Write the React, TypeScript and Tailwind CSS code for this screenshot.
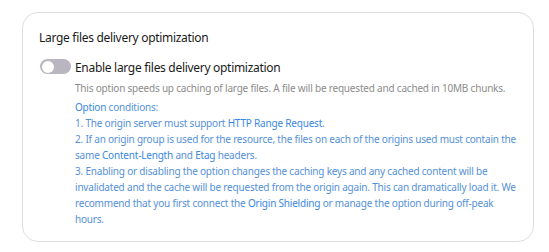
import React from 'react'

function App() {
  return (
    <div className="min-h-screen bg-white pt-3 pl-[22px] pr-4" style={{ fontFamily: '"Noto Sans", sans-serif' }}>
      <div className="w-[512px] h-[230px] rounded-2xl border border-[#dedede] pt-[15px] pl-[16px] pr-4">
        <div className="text-[12px] leading-5 tracking-[-0.3px] text-[#1a1a1a]">
          Large files delivery optimization
        </div>
        <div className="flex items-start gap-[4px] mt-[10px]">
          <div className="ml-[1px] mt-[1px] w-[31px] h-[15px] rounded-full bg-[#b9b5c1] flex items-center px-[2px] shrink-0">
            <div className="w-[12px] h-[12px] rounded-full bg-white" />
          </div>
          <div className="flex flex-col whitespace-nowrap">
            <div className="text-[12px] leading-5 tracking-[-0.3px] text-[#1a1a1a]">
              Enable large files delivery optimization
            </div>
            <div className="text-[10px] leading-4 tracking-[-0.2px] text-[#8c8c8c] mt-[2px]">
              This option speeds up caching of large files. A file will be requested and cached in 10MB chunks.
            </div>
            <div className="text-[10px] leading-4 tracking-[-0.2px] text-[#5590d9] mt-[3px]">
              <div><span className="text-[#3a88e2]">Option</span> conditions:</div>
              <div>1. The origin server must support <span className="text-[#3a88e2]">HTTP Range Request</span>.</div>
              <div>2. If an origin group is used for the resource, the files on each of the origins used must contain the</div>
              <div>same <span className="text-[#3a88e2]">Content-Length</span> and <span className="text-[#3a88e2]">Etag</span> headers.</div>
              <div>3. Enabling or disabling the option changes the caching keys and any cached content will be</div>
              <div>invalidated and the cache will be requested from the origin again. This can dramatically load it. We</div>
              <div>recommend that you first connect the <span className="text-[#3a88e2]">Origin Shielding</span> or manage the option during off-peak</div>
              <div>hours.</div>
            </div>
          </div>
        </div>
      </div>
    </div>
  )
}

export default App
